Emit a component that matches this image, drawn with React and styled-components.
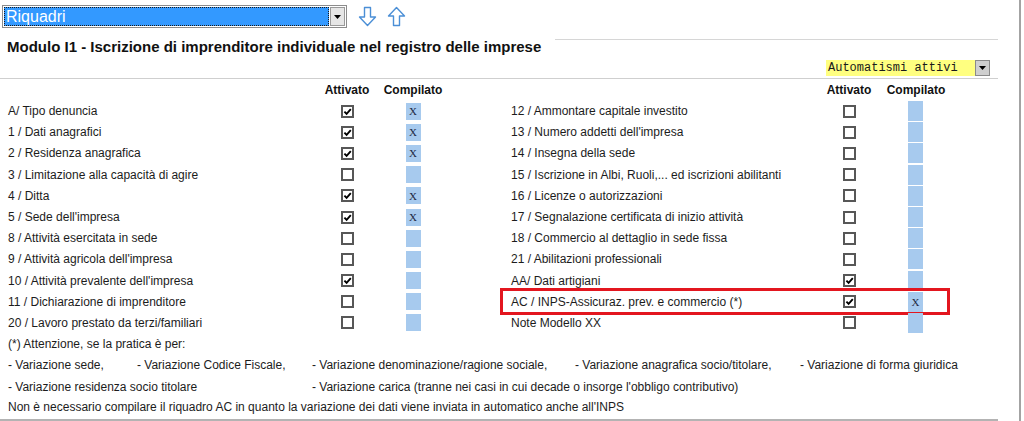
import React from "react";
import styled, { createGlobalStyle } from "styled-components";

const GlobalStyle = createGlobalStyle`
  html, body { margin: 0; padding: 0; background: #fff; }
  body { font-family: "Liberation Sans", Arial, sans-serif; color: #1c1c1c; }
`;

const leftRows = [
  { label: "A/ Tipo denuncia", on: true, x: true },
  { label: "1 / Dati anagrafici", on: true, x: true },
  { label: "2 / Residenza anagrafica", on: true, x: true },
  { label: "3 / Limitazione alla capacità di agire", on: false, x: false },
  { label: "4 / Ditta", on: true, x: true },
  { label: "5 / Sede dell'impresa", on: true, x: true },
  { label: "8 / Attività esercitata in sede", on: false, x: false },
  { label: "9 / Attività agricola dell'impresa", on: false, x: false },
  { label: "10 / Attività prevalente dell'impresa", on: true, x: false },
  { label: "11 / Dichiarazione di imprenditore", on: false, x: false },
  { label: "20 / Lavoro prestato da terzi/familiari", on: false, x: false },
];

const rightRows = [
  { label: "12 / Ammontare capitale investito", on: false, x: false },
  { label: "13 / Numero addetti dell'impresa", on: false, x: false },
  { label: "14 / Insegna della sede", on: false, x: false },
  { label: "15 / Iscrizione in Albi, Ruoli,... ed iscrizioni abilitanti", on: false, x: false },
  { label: "16 / Licenze o autorizzazioni", on: false, x: false },
  { label: "17 / Segnalazione certificata di inizio attività", on: false, x: false },
  { label: "18 / Commercio al dettaglio in sede fissa", on: false, x: false },
  { label: "21 / Abilitazioni professionali", on: false, x: false },
  { label: "AA/ Dati artigiani", on: true, x: false },
  { label: "AC / INPS-Assicuraz. prev. e commercio (*)", on: true, x: true, hl: true },
  { label: "Note Modello XX", on: false, x: false },
];

const Check = ({ on }) => (
  <svg width="13" height="13" viewBox="0 0 13 13">
    <rect x="1" y="1" width="11" height="11" fill="#fff" stroke="#575757" strokeWidth="2" />
    {on && (
      <path d="M3.4 6.6 L5.6 8.8 L9.8 4.2" fill="none" stroke="#000" strokeWidth="1.9" />
    )}
  </svg>
);

const ArrowDown = () => (
  <svg width="19" height="21" viewBox="0 0 19 21">
    <path
      d="M6.5 1.5 H12.5 V11 H17.5 L9.5 19.5 L1.5 11 H6.5 Z"
      fill="none"
      stroke="#4b8fd6"
      strokeWidth="1.4"
      strokeLinejoin="round"
    />
  </svg>
);

const ArrowUp = () => (
  <svg width="19" height="21" viewBox="0 0 19 21">
    <path
      d="M6.5 19.5 H12.5 V10 H17.5 L9.5 1.5 L1.5 10 H6.5 Z"
      fill="none"
      stroke="#4b8fd6"
      strokeWidth="1.4"
      strokeLinejoin="round"
    />
  </svg>
);

const Caret = () => (
  <svg width="7" height="4" viewBox="0 0 7 4">
    <path d="M0 0 H7 L3.5 4 Z" fill="#000" />
  </svg>
);

export default function App() {
  return (
    <Page>
      <GlobalStyle />
      <Toolbar>
        <MainSelect>
          <SelectText>Riquadri</SelectText>
          <DropButton>
            <Caret />
          </DropButton>
        </MainSelect>
        <ArrowButton><ArrowDown /></ArrowButton>
        <ArrowButton><ArrowUp /></ArrowButton>
      </Toolbar>

      <TitleRow>
        <Title>Modulo I1 - Iscrizione di imprenditore individuale nel registro delle imprese</Title>
        <TitleFiller />
      </TitleRow>

      <OptionsRow>
        <AutoSelect>
          <AutoText>Automatismi attivi</AutoText>
          <SmallDrop>
            <Caret />
          </SmallDrop>
        </AutoSelect>
      </OptionsRow>

      <Row>
        <LeftHalf>
          <span />
          <HeadCell>Attivato</HeadCell>
          <HeadCell>Compilato</HeadCell>
        </LeftHalf>
        <RightHalf>
          <span />
          <HeadCell>Attivato</HeadCell>
          <HeadCell $wide>Compilato</HeadCell>
        </RightHalf>
      </Row>

      {leftRows.map((l, i) => {
        const r = rightRows[i];
        return (
          <Row key={`row${i}`}>
            <LeftHalf>
              <Label>{l.label}</Label>
              <CheckCell><Check on={l.on} /></CheckCell>
              <FillBox>{l.x ? "X" : ""}</FillBox>
            </LeftHalf>
            <RightHalf $highlight={r.hl}>
              <Label>{r.label}</Label>
              <CheckCell><Check on={r.on} /></CheckCell>
              <FillBox $right>{r.x ? "X" : ""}</FillBox>
            </RightHalf>
          </Row>
        );
      })}

      <Note>(*) Attenzione, se la pratica è per:</Note>
      <NoteGrid>
        <span>- Variazione sede,</span>
        <span>- Variazione Codice Fiscale,</span>
        <span>- Variazione denominazione/ragione sociale,</span>
        <span>- Variazione anagrafica socio/titolare,</span>
        <span>- Variazione di forma giuridica</span>
        <NoteSpan $span={2}>- Variazione residenza socio titolare</NoteSpan>
        <NoteSpan $span={3}>- Variazione carica (tranne nei casi in cui decade o insorge l'obbligo contributivo)</NoteSpan>
      </NoteGrid>
      <Note $last>
        Non è necessario compilare il riquadro AC in quanto la variazione dei dati viene inviata in automatico anche all'INPS
      </Note>
    </Page>
  );
}

const Page = styled.div`
  width: 1021px;
  height: 421px;
  border-right: 2px solid #a3a3a3;
  overflow: hidden;
  padding-top: 5px;
  box-sizing: border-box;
  font-size: 12px;
`;

const Toolbar = styled.div`
  display: flex;
  align-items: center;
  height: 23px;
  padding-left: 2px;
  gap: 10px;
`;

const MainSelect = styled.div`
  width: 345px;
  height: 23px;
  box-sizing: border-box;
  border: 1px solid #8c8c8c;
  background: #fff;
  padding: 1px;
  display: flex;
  margin-right: 1px;
`;

const SelectText = styled.div`
  flex: 1;
  background: #3399ff;
  outline: 1px dotted #1a1a1a;
  outline-offset: -1px;
  color: #fff;
  font-size: 16px;
  line-height: 19px;
  padding-left: 2px;
`;

const DropButton = styled.div`
  width: 15px;
  margin-left: 1px;
  background: #e6e6e6;
  border: 1px solid #9a9a9a;
  box-sizing: border-box;
  display: flex;
  align-items: center;
  justify-content: center;
`;

const ArrowButton = styled.div`
  width: 19px;
  height: 21px;
  display: flex;
`;

const TitleRow = styled.div`
  display: flex;
  align-items: flex-start;
  margin-top: 10px;
  width: 998px;
`;

const Title = styled.div`
  font-size: 15px;
  font-weight: bold;
  line-height: 17px;
  padding-left: 7px;
  color: #111;
  white-space: nowrap;
`;

const TitleFiller = styled.div`
  flex: 1;
  margin-top: 1px;
  margin-left: 14px;
  border-top: 1px solid #d6d6d6;
`;

const OptionsRow = styled.div`
  width: 998px;
  display: flex;
  justify-content: flex-end;
  padding: 5px 8px 2px 0;
  box-sizing: border-box;
  border-bottom: 1px solid #cfcfcf;
`;

const AutoSelect = styled.div`
  width: 164px;
  height: 16px;
  display: flex;
  background: #ffff80;
`;

const AutoText = styled.div`
  flex: 1;
  font-family: "Liberation Mono", "Courier New", monospace;
  font-size: 12px;
  line-height: 16px;
  padding-left: 2px;
  color: #1a1a1a;
`;

const SmallDrop = styled.div`
  width: 15px;
  height: 16px;
  background: #cfcfcf;
  border: 1px solid #8a8a8a;
  box-sizing: border-box;
  display: flex;
  align-items: center;
  justify-content: center;
`;

const Row = styled.div`
  display: flex;
  height: 21.2px;
  &:nth-of-type(4) {
    height: 21.5px;
  }
`;

const LeftHalf = styled.div`
  width: 500px;
  box-sizing: border-box;
  padding-left: 8px;
  display: grid;
  grid-template-columns: 325px 28px 104px;
  align-items: center;
`;

const RightHalf = styled.div`
  width: 444px;
  margin-left: 3px;
  box-sizing: border-box;
  padding-left: 8px;
  display: grid;
  grid-template-columns: 324px 28px 84px;
  align-items: center;
  outline: ${(p) => (p.$highlight ? "3.5px solid #e3161f" : "none")};
`;

const HeadCell = styled.div`
  font-weight: bold;
  white-space: nowrap;
  justify-self: center;
  text-align: center;
  color: #111;
  ${(p) => (p.$wide ? "justify-self: start; width: 106px;" : "")}
`;

const Label = styled.div`
  white-space: nowrap;
  color: #1c1c1c;
`;

const CheckCell = styled.div`
  justify-self: center;
  display: flex;
`;

const FillBox = styled.div`
  width: 15px;
  height: ${(p) => (p.$right ? "20px" : "17px")};
  background: #a7caee;
  justify-self: ${(p) => (p.$right ? "start" : "center")};
  margin-left: ${(p) => (p.$right ? "45px" : "0")};
  font-family: "Liberation Serif", "Times New Roman", serif;
  font-size: 11px;
  color: #1f2a44;
  display: flex;
  align-items: center;
  justify-content: center;
`;

const Note = styled.div`
  height: 21.2px;
  line-height: 21.2px;
  padding-left: 8px;
  width: 998px;
  box-sizing: border-box;
  ${(p) => (p.$last ? "border-bottom: 2px solid #b3b3b3; height: 24px;" : "")}
`;

const NoteGrid = styled.div`
  display: grid;
  grid-template-columns: 129px 175px 263px 225px auto;
  grid-auto-rows: 21.2px;
  align-items: center;
  padding-left: 8px;
  white-space: nowrap;
`;

const NoteSpan = styled.span`
  grid-column: span ${(p) => p.$span};
`;
